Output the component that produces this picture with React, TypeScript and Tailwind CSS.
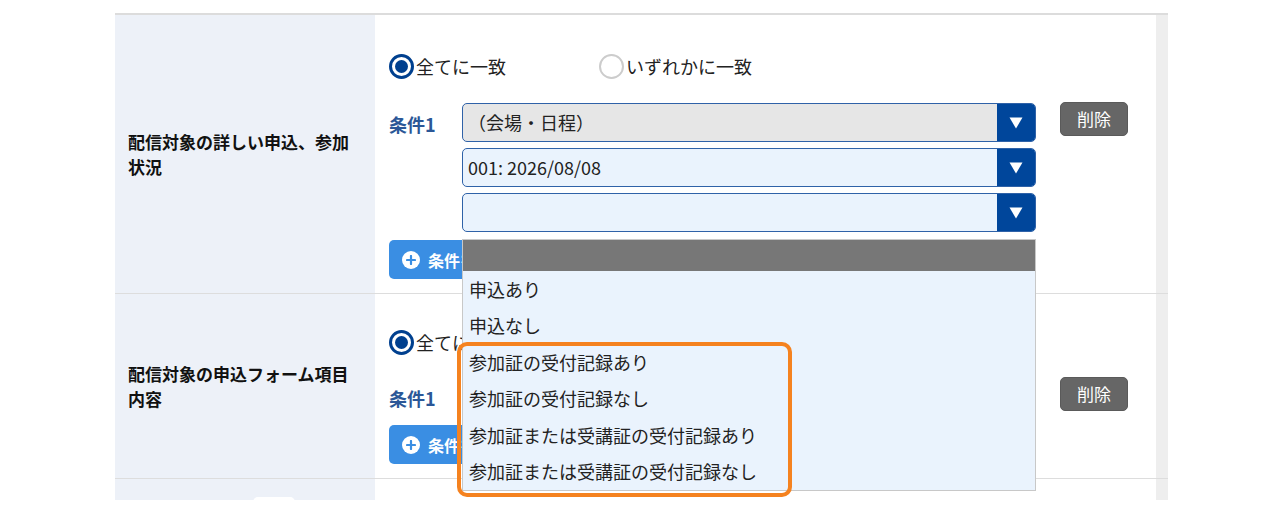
import React from "react";

const FONT = "font-['Noto_Sans_CJK_JP','Noto_Sans',sans-serif]";

function Radio({ checked, label }: { checked?: boolean; label: string }) {
  return (
    <label className="flex items-center gap-[2px] h-[24px]">
      {checked ? (
        <span className="w-[25px] h-[25px] rounded-full border-[3px] border-[#00408f] flex items-center justify-center bg-white">
          <span className="w-[13px] h-[13px] rounded-full bg-[#00408f]" />
        </span>
      ) : (
        <span className="w-[25px] h-[25px] rounded-full border-2 border-[#cccccc] bg-white" />
      )}
      <span className="text-[18px] text-[#222] leading-none">{label}</span>
    </label>
  );
}

function Select({ value, grey }: { value?: string; grey?: boolean }) {
  return (
    <div
      className={`flex h-[39px] w-[574px] rounded-[5px] border border-[#2f62a8] overflow-hidden ${
        grey ? "bg-[#e6e6e6]" : "bg-[#eaf3fd]"
      }`}
    >
      <div className="flex-1 flex items-center pl-[5px] text-[18px] text-[#222] whitespace-nowrap">{value}</div>
      <div className="w-[38px] bg-[#00469b] flex items-center justify-center">
        <svg width="14" height="12" viewBox="0 0 14 12">
          <path d="M0.5 0.5 H13.5 L7 11.5 Z" fill="#ffffff" />
        </svg>
      </div>
    </div>
  );
}

function AddButton() {
  return (
    <button className="flex items-center gap-[8px] h-[39px] w-[130px] pl-[13px] rounded-[5px] bg-[#3a8ee3] text-white text-[16px] font-bold">
      <span className="w-[18px] h-[18px] rounded-full bg-white flex items-center justify-center">
        <svg width="10" height="10" viewBox="0 0 10 10">
          <path d="M5 1 V9 M1 5 H9" stroke="#3a8ee3" strokeWidth="2.2" strokeLinecap="round" />
        </svg>
      </span>
      条件を追加
    </button>
  );
}

function DeleteButton() {
  return (
    <button className="w-[68px] h-[34px] rounded-[5px] bg-[#666666] border border-[#5a5a5a] text-white text-[17px] flex items-center justify-center">
      削除
    </button>
  );
}

function Label({ text }: { text: string }) {
  return (
    <div className="w-[260px] bg-[#edf1f8] flex items-center pl-[13px] pr-[20px] shrink-0">
      <p className="text-[17px] font-bold leading-[25px] text-[#111]">{text}</p>
    </div>
  );
}

const options = [
  "申込あり",
  "申込なし",
  "参加証の受付記録あり",
  "参加証の受付記録なし",
  "参加証または受講証の受付記録あり",
  "参加証または受講証の受付記録なし",
];

export default function App() {
  return (
    <div className={`relative w-[1280px] h-[522px] bg-white overflow-hidden ${FONT}`}>
      <div className="pt-[13px] pl-[115px]">
        <div className="w-[1053px] border-t-2 border-[#dcdcdc]">
          {/* Row 1 */}
          <div className="flex h-[279px] border-b border-[#dddddd]">
            <Label text="配信対象の詳しい申込、参加状況" />
            <div className="flex-1 pl-[14px] pt-[39px]">
              <div className="flex gap-[93px]">
                <Radio checked label="全てに一致" />
                <Radio label="いずれかに一致" />
              </div>
              <div className="flex mt-[25px]">
                <div className="w-[73px] h-[39px] flex items-center pt-[4px] text-[18px] font-bold text-[#2b5797]">条件1</div>
                <div className="flex flex-col gap-[6px]">
                  <Select grey value="（会場・日程）" />
                  <Select value="001: 2026/08/08" />
                  <Select />
                </div>
                <div className="ml-[24px] -mt-[1px]">
                  <DeleteButton />
                </div>
              </div>
              <div className="mt-[8px]">
                <AddButton />
              </div>
            </div>
            <div className="w-[12px] bg-[#eeeeee]" />
          </div>

          {/* Row 2 */}
          <div className="flex h-[185px] border-b border-[#dddddd]">
            <Label text="配信対象の申込フォーム項目内容" />
            <div className="flex-1 pl-[14px] pt-[36px]">
              <div className="flex gap-[93px]">
                <Radio checked label="全てに一致" />
                <Radio label="いずれかに一致" />
              </div>
              <div className="flex mt-[23px]">
                <div className="w-[73px] h-[39px] flex items-center pt-[4px] text-[18px] font-bold text-[#2b5797]">条件1</div>
                <Select />
                <div className="ml-[24px]">
                  <DeleteButton />
                </div>
              </div>
              <div className="mt-[9px]">
                <AddButton />
              </div>
            </div>
            <div className="w-[12px] bg-[#eeeeee]" />
          </div>

          {/* Row 3 */}
          <div className="flex h-[21px]">
            <div className="w-[260px] bg-[#edf1f8] pl-[138px] pt-[18px]">
              <div className="w-[42px] h-[10px] bg-white rounded-t-[5px]" />
            </div>
            <div className="flex-1" />
            <div className="w-[12px] bg-[#eeeeee]" />
          </div>
        </div>
      </div>

      {/* Open dropdown list */}
      <div className="absolute left-[462px] top-[239px] w-[574px] bg-[#eaf3fd] border border-[#c8c8c8] text-[18px] text-[#222]">
        <div className="h-[31px] bg-[#777777]" />
        {options.map((o) => (
          <div key={o} className="h-[36.5px] flex items-center pl-[6px] whitespace-nowrap">
            {o}
          </div>
        ))}
      </div>

      {/* Highlight */}
      <div className="absolute left-[457px] top-[342px] w-[335px] h-[155px] border-[4px] border-[#f5821f] rounded-[10px]" />
    </div>
  );
}
